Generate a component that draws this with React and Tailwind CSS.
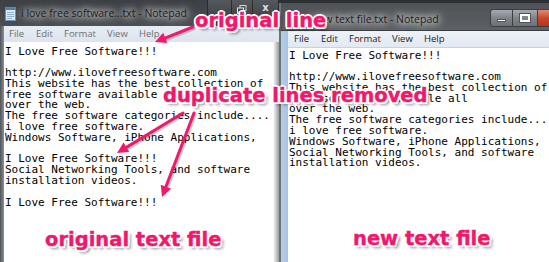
import React from "react";

const leftText = `I Love Free Software!!!

http://www.ilovefreesoftware.com
This website has the best collection of
free software available all
over the web.
The free software categories include....
i love free software.
Windows Software, iPhone Applications,

I Love Free Software!!!
Social Networking Tools, and software
installation videos.

I Love Free Software!!!`;

const rightText = `I Love Free Software!!!

http://www.ilovefreesoftware.com
This website has the best collection of
free software available all
over the web.
The free software categories include...
i love free software.
Windows Software, iPhone Applications,
Social Networking Tools, and software
installation videos.`;

const labelStyle =
  "absolute whitespace-nowrap font-bold text-[19.5px] leading-none text-[#f2176a] [font-family:'DejaVu_Sans',sans-serif] [-webkit-text-stroke:0.4px_#f2176a] [text-shadow:2px_0_0_#fff,-2px_0_0_#fff,0_2px_0_#fff,0_-2px_0_#fff,1.5px_1.5px_0_#fff,-1.5px_-1.5px_0_#fff,1.5px_-1.5px_0_#fff,-1.5px_1.5px_0_#fff,3px_3px_3px_rgba(0,0,0,0.45)]";

function head(tx, ty, fx, fy, len = 11, hw = 5.5) {
  const dx = tx - fx;
  const dy = ty - fy;
  const d = Math.hypot(dx, dy);
  const ux = dx / d;
  const uy = dy / d;
  const bx = tx - ux * len;
  const by = ty - uy * len;
  const px = -uy * hw;
  const py = ux * hw;
  return `${tx},${ty} ${bx + px},${by + py} ${bx - px},${by - py}`;
}

function Arrow({ fx, fy, tx, ty }) {
  const dx = tx - fx;
  const dy = ty - fy;
  const d = Math.hypot(dx, dy);
  const ex = tx - (dx / d) * 8;
  const ey = ty - (dy / d) * 8;
  return (
    <g>
      <line x1={fx + 1.5} y1={fy + 1.5} x2={ex + 1.5} y2={ey + 1.5} stroke="rgba(0,0,0,0.2)" strokeWidth="3" strokeLinecap="round" />
      <line x1={fx} y1={fy} x2={ex} y2={ey} stroke="#f0196b" strokeWidth="3" strokeLinecap="round" />
      <polygon points={head(tx, ty, fx, fy)} fill="#f0196b" />
    </g>
  );
}

function MenuBar({ dim }) {
  const c = dim ? "text-[#6f6f6f]" : "text-[#1a1a1a]";
  return (
    <div className={`flex items-center h-full text-[9.5px] [font-family:'Open_Sans',sans-serif] ${c}`}>
      <span className="w-[27px]">File</span>
      <span className="w-[28px]">Edit</span>
      <span className="w-[43px]">Format</span>
      <span className="w-[32px]">View</span>
      <span>Help</span>
    </div>
  );
}

export default function App() {
  return (
    <div className="relative w-[549px] h-[262px] overflow-hidden flex bg-[#2e3134]">
      {/* LEFT WINDOW */}
      <div className="w-[279px] shrink-0 h-full flex flex-col bg-[#45484c]">
        <div className="h-[26px] relative flex items-start bg-gradient-to-b from-[#3c3f43] to-[#4b4e52]">
          <svg className="absolute left-[5px] top-[7px]" width="11" height="14" viewBox="0 0 11 14">
            <rect x="0.5" y="0.5" width="10" height="13" fill="#d9e8f5" stroke="#6c8fb5" />
            <rect x="0.5" y="0.5" width="10" height="2.5" fill="#4f7fb0" />
            <line x1="2" y1="5.5" x2="9" y2="5.5" stroke="#8fb0d0" />
            <line x1="2" y1="7.5" x2="9" y2="7.5" stroke="#8fb0d0" />
            <line x1="2" y1="9.5" x2="9" y2="9.5" stroke="#8fb0d0" />
            <line x1="2" y1="11.5" x2="7" y2="11.5" stroke="#8fb0d0" />
          </svg>
          <span className="absolute left-[21px] top-[6px] text-[10.5px] text-[#1b1b1b] [font-family:'Open_Sans',sans-serif] whitespace-nowrap [text-shadow:0_0_6px_#fff,0_0_10px_rgba(255,255,255,0.9),0_0_14px_rgba(255,255,255,0.6)]">
            i love free software...txt - Notepad
          </span>
          <div className="absolute left-[207px] top-0 h-[20px] flex">
            <div className="w-[25px] h-full border border-[#2a2c2f] border-t-0 rounded-bl-[3px] bg-gradient-to-b from-[#55585c] to-[#3e4145]" />
            <div className="w-[20px] h-full border-b border-[#2a2c2f] bg-gradient-to-b from-[#55585c] to-[#3e4145] flex items-start justify-center pt-[5px]">
              <svg width="10" height="9" viewBox="0 0 10 9">
                <rect x="3" y="0.5" width="6" height="5" fill="none" stroke="#d8d8d8" />
                <rect x="0.5" y="3" width="6" height="5.5" fill="#4a4d51" stroke="#e8e8e8" />
              </svg>
            </div>
            <div className="w-[27px] h-full border border-[#2a2c2f] border-t-0 rounded-br-[3px] bg-gradient-to-b from-[#55585c] to-[#3e4145] flex items-start justify-center pt-[3px] text-[10px] leading-none text-[#e0e0e0] [font-family:'DejaVu_Sans',sans-serif] font-bold">
              x
            </div>
          </div>
        </div>
        <div className="flex-1 flex min-h-0">
          <div className="w-[4px] bg-gradient-to-r from-[#505459] to-[#8b9095]" />
          <div className="flex-1 flex flex-col">
            <div className="h-[16px] pl-[5px] bg-gradient-to-b from-[#e8edf4] to-[#dde4ee]">
              <MenuBar dim />
            </div>
            <div className="flex-1 bg-white relative pl-[1px] pt-[4.5px]">
              <pre className="m-0 text-[11px] leading-[10.8px] text-black [font-family:'DejaVu_Sans_Mono',monospace]">{leftText}</pre>
              <div className="absolute right-0 top-0 bottom-0 w-[6px] bg-gradient-to-r from-[#ffffff] to-[#9c9c9c]" />
            </div>
          </div>
        </div>
      </div>

      {/* RIGHT WINDOW */}
      <div className="flex-1 h-full flex flex-col pt-[3px]">
        <div className="flex-1 flex flex-col border-l-2 border-[#6c7379] bg-[#55585c]">
          <div className="h-[28px] relative bg-gradient-to-b from-[#4e5155] to-[#5d6064] border-b border-[#3a3d40]">
            <span className="absolute left-[31px] top-[9px] text-[10.5px] text-[#1b1b1b] [font-family:'Open_Sans',sans-serif] whitespace-nowrap [text-shadow:0_0_6px_#fff,0_0_10px_rgba(255,255,255,0.9),0_0_14px_rgba(255,255,255,0.6)]">
              new text file.txt - Notepad
            </span>
            <div className="absolute left-[209px] top-[6px] h-[18px] flex">
              <div className="w-[23px] h-full border border-[#3b3e42] rounded-l-[3px] bg-gradient-to-b from-[#a6abb1] via-[#7f858b] to-[#6c7278] flex items-center justify-center pt-[4px]">
                <div className="w-[9px] h-[3px] bg-white border border-[#555]" />
              </div>
              <div className="w-[24px] h-full border-y border-[#3b3e42] bg-gradient-to-b from-[#a6abb1] via-[#7f858b] to-[#6c7278] flex items-center justify-center">
                <div className="w-[10px] h-[8px] border-2 border-white outline outline-1 outline-[#555]" />
              </div>
              <div className="w-[20px] h-full border border-r-0 border-[#3b3e42] bg-gradient-to-b from-[#e08a74] via-[#c8482c] to-[#b8341c]" />
            </div>
          </div>
          <div className="flex-1 flex min-h-0">
            <div className="w-[7px] bg-gradient-to-r from-[#b6cde6] to-[#a6c4e4]" />
            <div className="flex-1 flex flex-col">
              <div className="h-[17px] pl-[6px] bg-gradient-to-b from-[#eef2f8] to-[#e2e9f2] border-b border-[#c9d3df]">
                <MenuBar />
              </div>
              <div className="flex-1 bg-white pl-[1px] pt-[2.5px]">
                <pre className="m-0 text-[11px] leading-[10.8px] text-black [font-family:'DejaVu_Sans_Mono',monospace]">{rightText}</pre>
              </div>
            </div>
          </div>
        </div>
      </div>

      {/* ARROWS */}
      <svg className="absolute inset-0 pointer-events-none" width="549" height="262" viewBox="0 0 549 262">
        <Arrow fx={193} fy={27} tx={155} ty={42} />
        <Arrow fx={183} fy={113} tx={117} ty={153} />
        <Arrow fx={194} fy={113} tx={162} ty={197} />
      </svg>

      {/* LABELS */}
      <span className={`${labelStyle} left-[195px] top-[10.5px]`}>original line</span>
      <span className={`${labelStyle} left-[163px] top-[86px]`}>duplicate lines removed</span>
      <span className={`${labelStyle} left-[45px] top-[230px]`}>original text file</span>
      <span className={`${labelStyle} left-[353px] top-[229px]`}>new text file</span>
    </div>
  );
}
